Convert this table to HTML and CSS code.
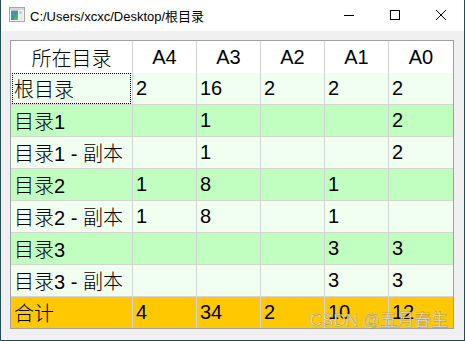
FILE: index.html
```html
<!DOCTYPE html>
<html lang="zh-CN">
<head>
<meta charset="utf-8">
<title>根目录</title>
<link rel="stylesheet" href="styles.css">
</head>
<body>
<div class="window">
  <div class="titlebar">
    <svg class="app-icon" width="16" height="15" viewBox="0 0 16 15">
      <defs>
        <linearGradient id="g" x1="0" y1="0" x2="1" y2="1">
          <stop offset="0" stop-color="#4f8fd0"/>
          <stop offset="0.5" stop-color="#3c9a8c"/>
          <stop offset="1" stop-color="#6cb86a"/>
        </linearGradient>
      </defs>
      <rect x="0.5" y="0.5" width="15" height="14" fill="#f4f4f4" stroke="#a8a8a8"/>
      <rect x="1" y="1" width="14" height="2" fill="#d8d8d8"/>
      <rect x="2" y="3.5" width="7" height="9.5" fill="url(#g)"/>
      <rect x="10" y="3.5" width="4" height="9.5" fill="#e8ece8"/>
      <rect x="10.5" y="4.5" width="2" height="2" fill="#9bc79b"/>
    </svg>
    <span class="title-text">C:/Users/xcxc/Desktop/根目录</span>
    <div class="controls">
      <span class="ctl">
        <svg width="10" height="10" viewBox="0 0 10 10"><line x1="0" y1="5.5" x2="10" y2="5.5" stroke="#000" stroke-width="1"/></svg>
      </span>
      <span class="ctl">
        <svg width="10" height="10" viewBox="0 0 10 10"><rect x="0.5" y="0.5" width="9" height="9" fill="none" stroke="#000" stroke-width="1"/></svg>
      </span>
      <span class="ctl">
        <svg width="10" height="10" viewBox="0 0 10 10"><path d="M0 0L10 10M10 0L0 10" stroke="#000" stroke-width="1"/></svg>
      </span>
    </div>
  </div>
  <div class="content">
    <div class="table">
      <div class="cell head">所在目录</div>
      <div class="cell head">A4</div>
      <div class="cell head">A3</div>
      <div class="cell head">A2</div>
      <div class="cell head">A1</div>
      <div class="cell head last-col">A0</div>

      <div class="cell light focus">根目录</div>
      <div class="cell light">2</div>
      <div class="cell light">16</div>
      <div class="cell light">2</div>
      <div class="cell light">2</div>
      <div class="cell light last-col">2</div>

      <div class="cell green">目录1</div>
      <div class="cell green"></div>
      <div class="cell green">1</div>
      <div class="cell green"></div>
      <div class="cell green"></div>
      <div class="cell green last-col">2</div>

      <div class="cell light">目录1 - 副本</div>
      <div class="cell light"></div>
      <div class="cell light">1</div>
      <div class="cell light"></div>
      <div class="cell light"></div>
      <div class="cell light last-col">2</div>

      <div class="cell green">目录2</div>
      <div class="cell green">1</div>
      <div class="cell green">8</div>
      <div class="cell green"></div>
      <div class="cell green">1</div>
      <div class="cell green last-col"></div>

      <div class="cell light">目录2 - 副本</div>
      <div class="cell light">1</div>
      <div class="cell light">8</div>
      <div class="cell light"></div>
      <div class="cell light">1</div>
      <div class="cell light last-col"></div>

      <div class="cell green">目录3</div>
      <div class="cell green"></div>
      <div class="cell green"></div>
      <div class="cell green"></div>
      <div class="cell green">3</div>
      <div class="cell green last-col">3</div>

      <div class="cell light">目录3 - 副本</div>
      <div class="cell light"></div>
      <div class="cell light"></div>
      <div class="cell light"></div>
      <div class="cell light">3</div>
      <div class="cell light last-col">3</div>

      <div class="cell total last-row">合计</div>
      <div class="cell total last-row">4</div>
      <div class="cell total last-row">34</div>
      <div class="cell total last-row">2</div>
      <div class="cell total last-row">10</div>
      <div class="cell total last-row last-col">12</div>
    </div>
  </div>
  <div class="watermark">CSDN @五月春生</div>
</div>
</body>
</html>
```

FILE: styles.css
```css
html, body {
  margin: 0;
  padding: 0;
}

body {
  width: 465px;
  height: 341px;
  overflow: hidden;
  background: #f0f0f0;
}

.window {
  position: relative;
  box-sizing: border-box;
  width: 465px;
  height: 341px;
  border: 1px solid #214c58;
  border-top: none;
  background: #f0f0f0;
  display: flex;
  flex-direction: column;
}

.titlebar {
  height: 31px;
  flex: none;
  background: #ffffff;
  display: flex;
  align-items: center;
  padding-left: 8px;
  box-sizing: border-box;
}

.app-icon {
  flex: none;
  margin-top: -2px;
}

.title-text {
  margin-left: 5px;
  font-family: "Liberation Sans", "Noto Sans CJK SC", sans-serif;
  font-size: 13px;
  color: #000;
  flex: 1;
  margin-top: -1px;
}

.controls {
  display: flex;
  height: 100%;
  align-items: flex-start;
}

.ctl {
  width: 46px;
  height: 30px;
  display: flex;
  align-items: center;
  justify-content: center;
}

.ctl svg {
  display: block;
}

.content {
  flex: 1;
  padding: 9px 10px 11px 9px;
}

.table {
  box-sizing: border-box;
  width: 444px;
  height: 289px;
  border: 1px solid #a0a0a0;
  display: grid;
  grid-template-columns: 122px 64px 64px 64px 64px 64px;
  grid-template-rows: 32px repeat(7, 32px) 31px;
  font-family: "Liberation Sans", "Noto Sans CJK SC", sans-serif;
  font-size: 20px;
  font-weight: 300;
  color: #000;
}

.cell {
  position: relative;
  box-sizing: border-box;
  border-right: 1px solid #d4d4d4;
  border-bottom: 1px solid #d4d4d4;
  display: flex;
  align-items: center;
  padding-left: 3px;
  white-space: nowrap;
  overflow: visible;
}

.head {
  background: #ffffff;
  border-bottom: none;
  justify-content: center;
  padding-left: 0;
}

.light {
  background: #f0fff0;
}

.green {
  background: #c0ffc0;
}

.total {
  background: #ffc800;
}

.last-col {
  border-right: none;
}

.last-row {
  border-bottom: none;
}

.focus::after {
  content: "";
  position: absolute;
  top: 0;
  left: 1px;
  right: 1px;
  bottom: 0;
  border: 1px dotted #000;
}

.watermark {
  position: absolute;
  right: 16px;
  bottom: 9px;
  font-family: "Liberation Sans", "Noto Sans CJK SC", sans-serif;
  font-size: 17px;
  color: rgba(236, 232, 224, 0.9);
  -webkit-text-stroke: 0.4px rgba(110, 110, 110, 0.7);
  pointer-events: none;
}
```
